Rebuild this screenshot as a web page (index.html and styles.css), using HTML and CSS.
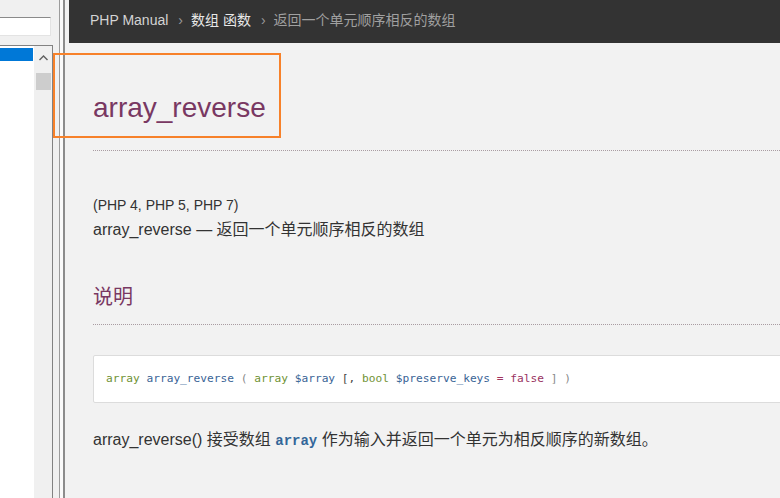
FILE: index.html
```html
<!DOCTYPE html>
<html lang="zh-CN">
<head>
<meta charset="utf-8">
<title>array_reverse</title>
<link rel="stylesheet" href="styles.css">
</head>
<body>
<div class="app">
  <aside class="sidebar">
    <div class="search"></div>
    <div class="list">
      <div class="items">
        <div class="item selected"></div>
      </div>
      <div class="scrollbar">
        <svg class="arrow" width="9" height="6" viewBox="0 0 9 6"><path d="M0.5 5 L4.5 1 L8.5 5" fill="none" stroke="#606060" stroke-width="1.4"/></svg>
        <div class="thumb"></div>
      </div>
    </div>
  </aside>
  <div class="splitter">
    <div class="line-a"></div>
    <div class="gap"></div>
    <div class="line-b"></div>
  </div>
  <main class="main">
    <nav class="header">
      <span class="crumb-home">PHP Manual</span><span class="sep">›</span><span class="crumb-mid">数组 函数</span><span class="sep">›</span><span class="crumb-cur">返回一个单元顺序相反的数组</span>
    </nav>
    <div class="content">
      <h1 class="title">array_reverse</h1>
      <p class="version">(PHP 4, PHP 5, PHP 7)</p>
      <p class="refpurpose">array_reverse — 返回一个单元顺序相反的数组</p>
      <h2 class="section">说明</h2>
      <div class="synopsis"><span class="type">array</span> <span class="fn">array_reverse</span> <span class="paren">(</span> <span class="type">array</span> <span class="param">$array</span> <span class="opt">[,</span> <span class="type">bool</span> <span class="param">$preserve_keys</span> <span class="eq">=</span> <span class="val">false</span> <span class="paren">] )</span></div>
      <p class="desc">array_reverse() 接受数组 <code class="ref">array</code> 作为输入并返回一个单元为相反顺序的新数组。</p>
    </div>
  </main>
  <div class="highlight"></div>
</div>
</body>
</html>
```
FILE: styles.css
```css
html, body {
  margin: 0;
  padding: 0;
}
body {
  width: 780px;
  height: 498px;
  overflow: hidden;
  font-family: "Liberation Sans", Arial, "Noto Sans CJK SC", sans-serif;
  color: #333;
  background: #f0f0f0;
}
.app {
  position: relative;
  display: flex;
  height: 498px;
}
.sidebar {
  width: 53px;
  flex: none;
  display: flex;
  flex-direction: column;
  background: #f0f0f0;
  padding-top: 17px;
  box-sizing: border-box;
}
.search {
  height: 19px;
  width: 53px;
  margin-left: -2px;
  box-sizing: border-box;
  background: #fff;
  border: 1px solid;
  border-color: #8a8a8a #e3e3e3 #e3e3e3 #8a8a8a;
}
.list {
  margin-top: 9px;
  flex: 1;
  display: flex;
  border-top: 1px solid #828282;
  border-right: 1px solid #828282;
}
.items {
  width: 34px;
  background: #fff;
  padding-top: 2px;
}
.item.selected {
  height: 13px;
  background: #0078d7;
  margin-right: 1px;
}
.scrollbar {
  flex: 1;
  background: #f0f0f0;
  display: flex;
  flex-direction: column;
  align-items: center;
  padding-top: 9px;
}
.arrow {
  display: block;
}
.thumb {
  margin-top: 12px;
  width: 15px;
  height: 17px;
  background: #cdcdcd;
}
.splitter {
  width: 12px;
  flex: none;
  box-sizing: border-box;
  padding-left: 6px;
  display: flex;
  background: #f0f0f0;
}
.line-a {
  width: 1px;
  background: #9c9c9c;
}
.gap {
  width: 3px;
  background: #fafafa;
}
.line-b {
  width: 2px;
  background: #8c8c8c;
}
.main {
  flex: 1;
  min-width: 0;
  background: #f2f2f2;
  padding-left: 4px;
  overflow: hidden;
}
.header {
  height: 43px;
  box-sizing: border-box;
  padding: 10px 0 0 21px;
  background: #333;
  font-size: 14px;
  line-height: 20px;
  white-space: nowrap;
}
.crumb-home {
  color: #d4d4d4;
}
.crumb-mid {
  color: #e8e8e8;
}
.crumb-cur {
  color: #a0a0a0;
}
.sep {
  color: #9a9a9a;
  margin: 0 8px 0 10px;
}
.content {
  padding-left: 24px;
  margin-right: -20px;
}
.title {
  margin: 48px 0 0;
  padding-bottom: 25px;
  font-size: 28px;
  line-height: 34px;
  font-weight: normal;
  color: #793862;
  border-bottom: 1px dotted #a99ca2;
}
.version {
  margin: 44px 0 0;
  font-size: 14px;
  line-height: 20px;
}
.refpurpose {
  margin: 3px 0 0;
  font-size: 16px;
  line-height: 24px;
}
.section {
  margin: 41px 0 0;
  padding-bottom: 13px;
  font-size: 20px;
  line-height: 28px;
  font-weight: normal;
  color: #793862;
  border-bottom: 1px dotted #a99ca2;
}
.synopsis {
  margin-top: 30px;
  background: #fff;
  border: 1px solid #dcdcdc;
  border-radius: 2px;
  padding: 13px 12px;
  font-family: "DejaVu Sans Mono", "Liberation Mono", monospace;
  font-size: 11.2px;
  line-height: 20px;
  white-space: nowrap;
  color: #333;
}
.type {
  color: #6f9233;
}
.fn {
  color: #3a6496;
}
.param {
  color: #3a6496;
}
.paren {
  color: #888;
}
.opt {
  color: #444;
}
.eq {
  color: #a0345f;
}
.val {
  color: #99335f;
}
.desc {
  margin: 25px 0 0;
  font-size: 16px;
  line-height: 24px;
}
.ref {
  font-family: "Liberation Mono", "DejaVu Sans Mono", monospace;
  font-weight: bold;
  font-size: 14px;
  color: #336699;
}
.highlight {
  position: absolute;
  left: 53px;
  top: 53px;
  width: 228px;
  height: 85px;
  box-sizing: border-box;
  border: 2px solid #f7812a;
}
```
